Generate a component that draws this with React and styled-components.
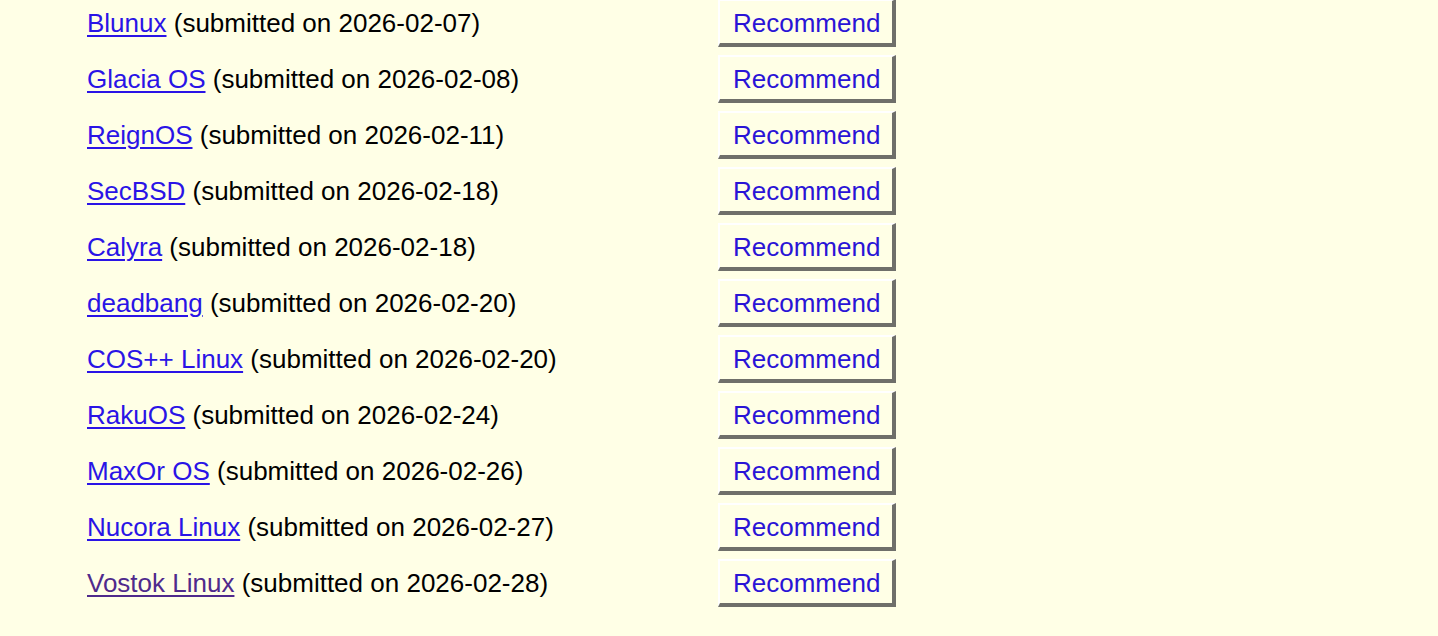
import React from "react";
import styled, { createGlobalStyle } from "styled-components";

const Global = createGlobalStyle`
  html, body { margin: 0; padding: 0; background: #ffffe6; }
  body { font-family: "Liberation Sans", Arial, sans-serif; font-size: 26px; color: #000; }
`;

const List = styled.div`
  display: grid;
  grid-template-columns: 631px auto;
  grid-auto-rows: 56px;
  align-items: center;
  margin: -5px 0 0 87px;
`;

const Entry = styled.div`
  white-space: nowrap;
  line-height: 30px;
`;

const Link = styled.a`
  color: ${(p) => (p.$visited ? "#4f2a8c" : "#2a14e6")};
  text-decoration: underline;
  text-underline-offset: 3px;
  text-decoration-thickness: 2px;
`;

const Button = styled.button`
  justify-self: start;
  font-family: "Liberation Sans", Arial, sans-serif;
  font-size: 26px;
  line-height: 30px;
  color: #2a14d6;
  background: #ffffe6;
  padding: 7px 12px 5px 13px;
  border-style: solid;
  border-width: 2px 4px 4px 2px;
  border-color: #ffffff #6f6f6a #6f6f6a #ffffff;
  cursor: pointer;
`;

const items = [
  ["Blunux", "2026-02-07"],
  ["Glacia OS", "2026-02-08"],
  ["ReignOS", "2026-02-11"],
  ["SecBSD", "2026-02-18"],
  ["Calyra", "2026-02-18"],
  ["deadbang", "2026-02-20"],
  ["COS++ Linux", "2026-02-20"],
  ["RakuOS", "2026-02-24"],
  ["MaxOr OS", "2026-02-26"],
  ["Nucora Linux", "2026-02-27"],
  ["Vostok Linux", "2026-02-28", true],
];

export default function App() {
  return (
    <>
      <Global />
      <List>
        {items.map(([name, date, visited]) => (
          <React.Fragment key={name}>
            <Entry>
              <Link href="#" $visited={visited}>{name}</Link> (submitted on {date})
            </Entry>
            <Button type="button">Recommend</Button>
          </React.Fragment>
        ))}
      </List>
    </>
  );
}
